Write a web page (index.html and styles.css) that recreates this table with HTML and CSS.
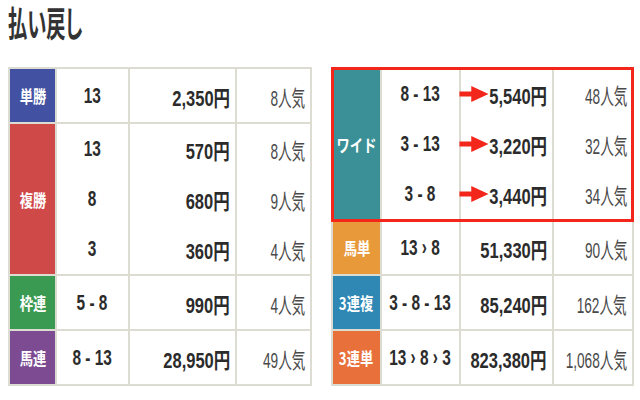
FILE: index.html
```html
<!DOCTYPE html>
<html lang="ja">
<head>
<meta charset="utf-8">
<title>払い戻し</title>
<link rel="stylesheet" href="styles.css">
</head>
<body>
<div class="page">
  <h1 class="title"><span class="sx">払い戻し</span></h1>
  <div class="tables">
    <div class="tbl tbl-left">
      <div class="lbl c-tan"><span>単勝</span></div>
      <div class="cell num"><div class="sub"><span class="sx">13</span></div></div>
      <div class="cell pay"><div class="sub"><span class="sx">2,350円</span></div></div>
      <div class="cell pop"><div class="sub"><span class="sx">8人気</span></div></div>

      <div class="lbl c-fuku"><span>複勝</span></div>
      <div class="cell num">
        <div class="sub"><span class="sx">13</span></div>
        <div class="sub"><span class="sx">8</span></div>
        <div class="sub"><span class="sx">3</span></div>
      </div>
      <div class="cell pay">
        <div class="sub"><span class="sx">570円</span></div>
        <div class="sub"><span class="sx">680円</span></div>
        <div class="sub"><span class="sx">360円</span></div>
      </div>
      <div class="cell pop">
        <div class="sub"><span class="sx">8人気</span></div>
        <div class="sub"><span class="sx">9人気</span></div>
        <div class="sub"><span class="sx">4人気</span></div>
      </div>

      <div class="lbl c-waku"><span>枠連</span></div>
      <div class="cell num"><div class="sub"><span class="sx">5 - 8</span></div></div>
      <div class="cell pay"><div class="sub"><span class="sx">990円</span></div></div>
      <div class="cell pop"><div class="sub"><span class="sx">4人気</span></div></div>

      <div class="lbl c-umaren"><span>馬連</span></div>
      <div class="cell num"><div class="sub"><span class="sx">8 - 13</span></div></div>
      <div class="cell pay"><div class="sub"><span class="sx">28,950円</span></div></div>
      <div class="cell pop"><div class="sub"><span class="sx">49人気</span></div></div>
    </div>

    <div class="right-wrap">
      <div class="tbl tbl-right">
        <div class="lbl c-wide"><span>ワイド</span></div>
        <div class="cell num">
          <div class="sub"><span class="sx">8 - 13</span></div>
          <div class="sub"><span class="sx">3 - 13</span></div>
          <div class="sub"><span class="sx">3 - 8</span></div>
        </div>
        <div class="cell pay">
          <div class="sub"><span class="sx"><svg class="arrow" width="39" height="16" viewBox="0 0 39 16"><path d="M0 5.5H16V0L39 8L16 16V10.5H0Z" fill="#f2261a"/></svg>5,540円</span></div>
          <div class="sub"><span class="sx"><svg class="arrow" width="39" height="16" viewBox="0 0 39 16"><path d="M0 5.5H16V0L39 8L16 16V10.5H0Z" fill="#f2261a"/></svg>3,220円</span></div>
          <div class="sub"><span class="sx"><svg class="arrow" width="39" height="16" viewBox="0 0 39 16"><path d="M0 5.5H16V0L39 8L16 16V10.5H0Z" fill="#f2261a"/></svg>3,440円</span></div>
        </div>
        <div class="cell pop">
          <div class="sub"><span class="sx">48人気</span></div>
          <div class="sub"><span class="sx">32人気</span></div>
          <div class="sub"><span class="sx">34人気</span></div>
        </div>

        <div class="lbl c-umatan"><span>馬単</span></div>
        <div class="cell num"><div class="sub"><span class="sx">13 › 8</span></div></div>
        <div class="cell pay"><div class="sub"><span class="sx">51,330円</span></div></div>
        <div class="cell pop"><div class="sub"><span class="sx">90人気</span></div></div>

        <div class="lbl c-3fuku"><span>3連複</span></div>
        <div class="cell num"><div class="sub"><span class="sx">3 - 8 - 13</span></div></div>
        <div class="cell pay"><div class="sub"><span class="sx">85,240円</span></div></div>
        <div class="cell pop"><div class="sub"><span class="sx">162人気</span></div></div>

        <div class="lbl c-3tan"><span>3連単</span></div>
        <div class="cell num"><div class="sub"><span class="sx">13 › 8 › 3</span></div></div>
        <div class="cell pay"><div class="sub"><span class="sx">823,380円</span></div></div>
        <div class="cell pop"><div class="sub"><span class="sx">1,068人気</span></div></div>
      </div>
      <div class="highlight"></div>
    </div>
  </div>
</div>
</body>
</html>
```
FILE: styles.css
```css
* { box-sizing: border-box; }
html, body { margin: 0; padding: 0; background: #fff; }
body {
  font-family: "Liberation Sans", "Noto Sans CJK JP", sans-serif;
  color: #2a2a2a;
}
.page { padding: 0 0 0 8px; width: 640px; }

.title {
  margin: 0;
  height: 67px;
  font-family: "Noto Sans CJK JP", sans-serif;
  font-size: 35px;
  line-height: 44px;
  font-weight: 700;
  color: #333;
  font-feature-settings: "palt";
}
.title .sx {
  display: inline-block;
  white-space: nowrap;
  transform: scaleX(0.55);
  transform-origin: left center;
}

.tables { display: flex; gap: 19px; align-items: flex-start; }

.tbl {
  display: grid;
  gap: 2px;
  padding: 2px;
  background: #dcdcd3;
}
.tbl-left {
  grid-template-columns: 45px 71px 105px 73px;
  grid-template-rows: 53px 150px 53px 53px;
}
.tbl-right {
  grid-template-columns: 47px 77px 91px 78px;
  grid-template-rows: 150px 53px 53px 53px;
}

.right-wrap { position: relative; }
.highlight {
  position: absolute;
  left: 0;
  top: 0;
  width: 303px;
  height: 155px;
  border: 3px solid #f2261a;
  pointer-events: none;
}

.lbl {
  display: flex;
  align-items: center;
  justify-content: center;
  color: #fff;
  font-family: "Noto Sans CJK JP", sans-serif;
  font-weight: 700;
  font-size: 17px;
}
.lbl span { display: inline-block; white-space: nowrap; transform: scaleX(0.78); }

.c-tan { background: #4351a2; }
.c-fuku { background: #cf4949; }
.c-waku { background: #3b9a52; }
.c-umaren { background: #7c4b91; }
.c-wide { background: #3a9096; }
.c-umatan { background: #e89a3b; }
.c-3fuku { background: #2f87b4; }
.c-3tan { background: #e8703b; }

.cell {
  background: #fff;
  display: flex;
  flex-direction: column;
}
.sub {
  flex: 1;
  display: flex;
  align-items: center;
}
.sx {
  display: inline-flex;
  align-items: center;
  white-space: nowrap;
}
.num .sub { justify-content: center; }
.num .sx {
  font-size: 22px;
  font-weight: 700;
  color: #2b2b2b;
  transform: scaleX(0.7);
  transform-origin: center;
}
.pay .sub, .pop .sub { justify-content: flex-end; padding-right: 5px; }
.pay .sx {
  font-size: 22px;
  font-weight: 700;
  color: #2b2b2b;
  transform: scaleX(0.75);
  transform-origin: right center;
}
.pop .sx {
  font-size: 22px;
  font-weight: 400;
  color: #4a4a4a;
  transform: scaleX(0.62);
  transform-origin: right center;
}
.arrow { display: block; margin-right: 1px; }
```
